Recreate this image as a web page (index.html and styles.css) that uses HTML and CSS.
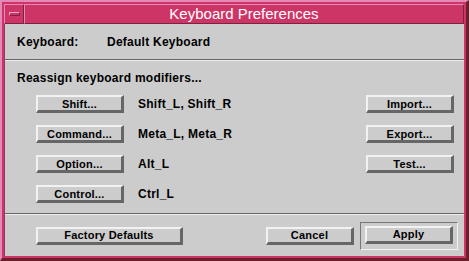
FILE: index.html
```html
<!DOCTYPE html>
<html lang="en">
<head>
    <meta charset="UTF-8">
    <title>Keyboard Preferences</title>
    <link rel="stylesheet" href="styles.css">
</head>
<body>
    <div class="window">
        <div class="titlebar">
            <div class="menu-box"><span class="menu-bar"></span></div>
            <div class="title">Keyboard Preferences</div>
        </div>
        <div class="content">
            <div class="kbd-row">
                <span class="kbd-label">Keyboard:</span>
                <span>Default Keyboard</span>
            </div>
            <div class="sep"></div>
            <div class="reassign">Reassign keyboard modifiers...</div>
            <div class="modifiers">
                <button class="btn">Shift...</button>
                <span class="keys">Shift_L, Shift_R</span>
                <button class="btn">Import...</button>

                <button class="btn">Command...</button>
                <span class="keys">Meta_L, Meta_R</span>
                <button class="btn">Export...</button>

                <button class="btn">Option...</button>
                <span class="keys">Alt_L</span>
                <button class="btn">Test...</button>

                <button class="btn">Control...</button>
                <span class="keys">Ctrl_L</span>
                <span></span>
            </div>
            <div class="sep"></div>
            <div class="footer">
                <button class="btn wide">Factory Defaults</button>
                <button class="btn">Cancel</button>
                <div class="default-frame">
                    <button class="btn">Apply</button>
                </div>
            </div>
        </div>
    </div>
</body>
</html>
```

FILE: styles.css
```css
* {
    margin: 0;
    padding: 0;
    box-sizing: border-box;
}

body {
    font-family: "Liberation Sans", Arial, sans-serif;
    background-color: #cccccc;
}

.window {
    width: 469px;
    height: 261px;
    display: flex;
    flex-direction: column;
    background-color: #cd3567;
    border-style: solid;
    border-width: 2px 3px 3px 2px;
    border-color: #e58ab8 #6a1f2b #6a1f2b #e58ab8;
    padding: 2px 2px 2px 2px;
}

.titlebar {
    height: 20px;
    display: flex;
}

.menu-box {
    width: 20px;
    height: 20px;
    border-style: solid;
    border-width: 1px;
    border-color: #e58ab8 #7a2440 #7a2440 #e58ab8;
    display: flex;
    align-items: center;
    justify-content: center;
}

.menu-bar {
    width: 11px;
    height: 4px;
    border-style: solid;
    border-width: 1px;
    border-color: #f0a0c8 #7a2440 #7a2440 #f0a0c8;
}

.title {
    flex: 1;
    height: 20px;
    border-style: solid;
    border-width: 1px;
    border-color: #e58ab8 #7a2440 #7a2440 #e58ab8;
    color: white;
    font-size: 15px;
    line-height: 17px;
    text-align: center;
}

.content {
    flex: 1;
    background-color: #cccccc;
    border-left: 1px solid #8a4058;
    display: flex;
    flex-direction: column;
    font-size: 12px;
    font-weight: bold;
    letter-spacing: 0.25px;
    color: black;
}

.kbd-row {
    height: 35px;
    display: flex;
    align-items: center;
    padding-left: 12px;
}

.kbd-label {
    width: 90px;
}

.sep {
    border-top: 1px solid #666666;
    border-bottom: 1px solid #eeeeee;
}

.reassign {
    padding: 9px 12px 0;
    line-height: 16px;
}

.modifiers {
    display: grid;
    grid-template-columns: 88px 1fr 88px;
    column-gap: 14px;
    row-gap: 12px;
    align-items: center;
    padding: 9px 10px 10px 31px;
}

.btn {
    width: 88px;
    height: 18px;
    background-color: #cccccc;
    border-style: solid;
    border-width: 2px 3px 3px 2px;
    border-color: #f2f2f2 #666666 #666666 #f2f2f2;
    font-family: "Liberation Sans", Arial, sans-serif;
    font-size: 11px;
    font-weight: bold;
    letter-spacing: 0.2px;
    color: black;
    line-height: 12px;
}

.btn.wide {
    width: 147px;
    margin-right: auto;
}

.footer {
    flex: 1;
    display: flex;
    align-items: center;
    gap: 6px;
    padding: 0 6px 0 31px;
}

.default-frame {
    width: 98px;
    height: 28px;
    border-style: solid;
    border-width: 1px;
    border-color: #777777 #f2f2f2 #f2f2f2 #777777;
    padding: 3px 4px;
}
```
